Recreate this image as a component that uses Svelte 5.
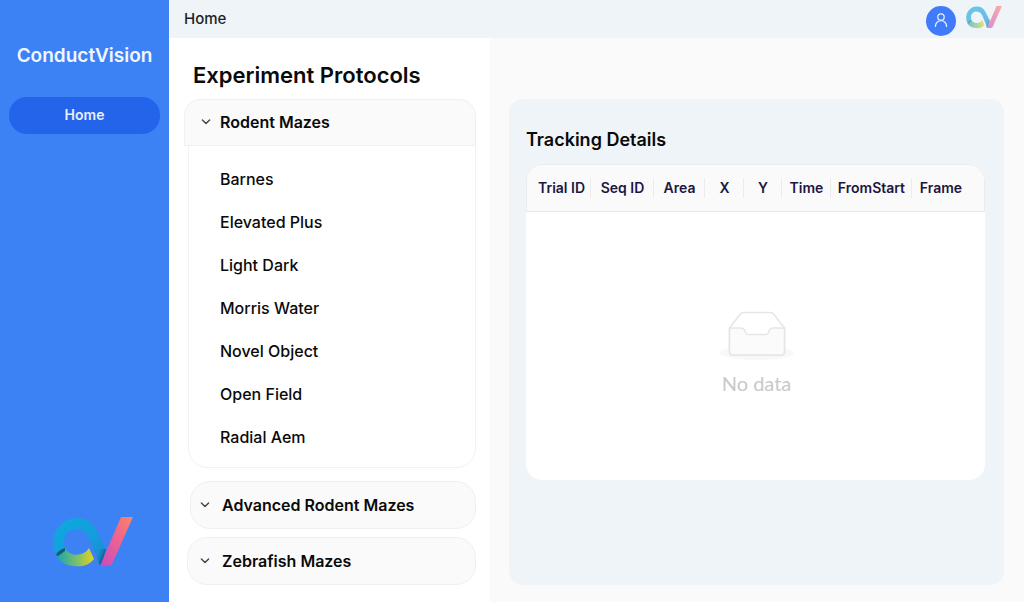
<script>
  const mazes = [
    'Barnes',
    'Elevated Plus',
    'Light Dark',
    'Morris Water',
    'Novel Object',
    'Open Field',
    'Radial Aem'
  ];

  // Relative column weights of the tracking table
  const columns = [
    { label: 'Trial ID', weight: 65 },
    { label: 'Seq ID', weight: 63 },
    { label: 'Area', weight: 51 },
    { label: 'X', weight: 39 },
    { label: 'Y', weight: 38 },
    { label: 'Time', weight: 49 },
    { label: 'FromStart', weight: 81 },
    { label: 'Frame', weight: 73 }
  ];
  const total = columns.reduce((sum, c) => sum + c.weight, 0);

  let open = $state(true);
</script>

{#snippet chevron()}
  <svg class="chevron" viewBox="0 0 12 12" aria-hidden="true">
    <path d="M2.4 4 L6 7.6 L9.6 4" fill="none" stroke="#444" stroke-width="1.4" stroke-linecap="round" stroke-linejoin="round" />
  </svg>
{/snippet}

{#snippet logo(id)}
  <svg viewBox="0 0 80 52" aria-hidden="true">
    <defs>
      <linearGradient id="{id}-ring" x1="0" y1="0" x2="1" y2="1">
        <stop offset="0" stop-color="#0cabdc" />
        <stop offset="0.6" stop-color="#149cdc" />
        <stop offset="1" stop-color="#1c86cc" />
      </linearGradient>
      <linearGradient id="{id}-tail" x1="0" y1="0" x2="1" y2="0">
        <stop offset="0" stop-color="#16a3b4" />
        <stop offset="0.5" stop-color="#6fbd74" />
        <stop offset="1" stop-color="#e6d41c" />
      </linearGradient>
      <linearGradient id="{id}-arm" x1="1" y1="0" x2="0" y2="1">
        <stop offset="0" stop-color="#fb8465" />
        <stop offset="0.45" stop-color="#ee6390" />
        <stop offset="1" stop-color="#c94bc0" />
      </linearGradient>
      <linearGradient id="{id}-fold" x1="0" y1="0" x2="1" y2="0.5">
        <stop offset="0.2" stop-color="#149cdc" stop-opacity="0" />
        <stop offset="1" stop-color="#103a64" />
      </linearGradient>
    </defs>
    <path d="M3 38 C-5 19 7 1 24 1 C33 1 39 5 42 11 L53 32 L48 49 C46 48 45 44 44 40 L36 21 C33 15 29 12 23 12 C14 12 9 21 12 31 Z" fill="url(#{id}-ring)" />
    <path d="M3 38 C6 34 9 32 12 31 C15 37 22 39 28 37 C32 36 34 34 36 31 L41 42 C36 48 30 50 22 49 C12 49 6 44 3 38 Z" fill="url(#{id}-tail)" />
    <path d="M3 38 C5 34 8 32 12 31 L12 34 L5 39 Z" fill="#125b78" />
    <path d="M41 32 L53 32 L48 49 C46 48 45 44 44 40 Z" fill="url(#{id}-fold)" />
    <path d="M68 0 L80 0 L59 47 C58 49 49 49 47 49 Z" fill="url(#{id}-arm)" />
  </svg>
{/snippet}

<div class="app">
  <aside class="sidebar">
    <div class="brand">ConductVision</div>
    <nav><a class="nav-link" href="#home">Home</a></nav>
    <div class="sidebar-logo">{@render logo('side')}</div>
  </aside>

  <div class="main">
    <header class="topbar">
      <span class="crumb">Home</span>
      <div class="account">
        <button class="avatar" type="button" aria-label="Account">
          <svg viewBox="0 0 30 30" aria-hidden="true">
            <g fill="none" stroke="#e4ecff" stroke-width="1.3" stroke-linecap="round">
              <circle cx="15" cy="11" r="3.2" />
              <path d="M9.4 20.4 C9.4 17 12 14.6 15 14.6 C18 14.6 20.6 17 20.6 20.4" />
            </g>
          </svg>
        </button>
        <div class="top-logo">{@render logo('top')}</div>
      </div>
    </header>

    <div class="content">
      <section class="protocols">
        <h1>Experiment Protocols</h1>

        <div class="group">
          <button class="head first" class:open type="button" aria-expanded={open} onclick={() => (open = !open)}>
            {@render chevron()}<span>Rodent Mazes</span>
          </button>
          {#if open}
            <ul class="mazes">
              {#each mazes as maze}
                <li>{maze}</li>
              {/each}
            </ul>
          {/if}
        </div>

        <button class="head advanced" type="button">
          {@render chevron()}<span>Advanced Rodent Mazes</span>
        </button>
        <button class="head zebrafish" type="button">
          {@render chevron()}<span>Zebrafish Mazes</span>
        </button>
      </section>

      <section class="tracking">
        <div class="card">
          <h2>Tracking Details</h2>
          <div class="table-box">
            <table>
              <colgroup>
                {#each columns as c}
                  <col style="width: {(c.weight / total) * 100}%" />
                {/each}
              </colgroup>
              <thead>
                <tr>
                  {#each columns as c}
                    <th scope="col">{c.label}</th>
                  {/each}
                </tr>
              </thead>
              <tbody>
                <tr>
                  <td colspan={columns.length}>
                    <svg class="empty" viewBox="0 0 74 52" aria-hidden="true">
                      <ellipse cx="37" cy="43" rx="37" ry="7" fill="#f8f8f8" />
                      <path d="M9.5 18 L20 4.5 C21 3 22 2.5 24 2.5 H50 C52 2.5 53 3 54 4.5 L64.5 18 V42 C64.5 44 63.5 45 61.5 45 H12.5 C10.5 45 9.5 44 9.5 42 Z" fill="#fff" stroke="#e6e6e6" stroke-width="1.6" />
                      <path d="M9.5 18 H21 C23 18 24 18.5 25 21 L26 23.5 C26.5 24.5 27 24.5 28 24.5 H46 C47 24.5 47.5 24.5 48 23.5 L49 21 C50 18.5 51 18 53 18 H64.5 V42 C64.5 44 63.5 45 61.5 45 H12.5 C10.5 45 9.5 44 9.5 42 Z" fill="#fbfbfb" stroke="#e6e6e6" stroke-width="1.6" />
                    </svg>
                    <div class="no-data">No data</div>
                  </td>
                </tr>
              </tbody>
            </table>
          </div>
        </div>
      </section>
    </div>
  </div>
</div>

<style>
  :global(body) {
    margin: 0;
  }

  .app {
    display: grid;
    grid-template-columns: 169px 1fr;
    min-height: 100vh;
    font-family: Inter, 'Liberation Sans', sans-serif;
    color: #0a0a0a;
    background: #fafafa;
  }

  svg {
    display: block;
  }

  button {
    font: inherit;
    color: inherit;
    cursor: pointer;
  }

  .sidebar {
    display: flex;
    flex-direction: column;
    box-sizing: border-box;
    padding: 44px 9px 33px;
    background: #3d82f5;
    color: #f1f6ff;
  }

  .brand {
    font-size: 19px;
    line-height: 24px;
    font-weight: 600;
    text-align: center;
  }

  .nav-link {
    display: block;
    margin-top: 29px;
    padding-bottom: 1px;
    border-radius: 18px;
    background: #2364eb;
    color: #e8f0ff;
    font-size: 14px;
    line-height: 36px;
    font-weight: 600;
    text-align: center;
    text-decoration: none;
  }

  .sidebar-logo {
    width: 80px;
    margin: auto auto 0 44px;
  }

  .main {
    display: flex;
    flex-direction: column;
    min-width: 0;
  }

  .topbar {
    display: flex;
    justify-content: space-between;
    height: 38px;
    padding: 0 22px 0 15px;
    background: #eff4f8;
  }

  .crumb {
    font-size: 15px;
    line-height: 38px;
    font-weight: 500;
    color: #1c1f24;
  }

  .account {
    display: flex;
    gap: 10px;
    padding-top: 6px;
  }

  .avatar {
    width: 30px;
    height: 30px;
    padding: 0;
    border: 0;
    border-radius: 50%;
    background: #3f7bfa;
  }

  .top-logo {
    width: 36px;
    opacity: 0.6;
  }

  .content {
    flex: 1;
    display: grid;
    grid-template-columns: 321fr 534fr;
  }

  .protocols {
    padding: 22px 14px 17px 15px;
    background: #fff;
  }

  h1 {
    margin: 0 0 9px 9px;
    font-size: 22px;
    line-height: 30px;
    font-weight: 600;
  }

  .head {
    display: flex;
    align-items: center;
    box-sizing: border-box;
    height: 48px;
    padding: 0 15px 1px;
    gap: 8px;
    border: 1px solid #f0f0f0;
    border-radius: 20px;
    background: #fafafa;
    font-size: 16px;
    font-weight: 600;
  }

  .first {
    width: 100%;
    height: 47px;
  }

  .first.open {
    border-radius: 16px 16px 0 0;
  }

  .advanced {
    width: calc(100% - 6px);
    margin: 13px 0 0 6px;
    padding: 0 8px;
    gap: 11px;
  }

  .zebrafish {
    width: calc(100% - 3px);
    margin: 8px 0 0 3px;
    padding: 0 11px;
    gap: 11px;
  }

  .chevron {
    width: 12px;
    height: 12px;
  }

  .mazes {
    margin: 0 0 0 4px;
    padding: 12px 31px 8px;
    border: 1px solid #f2f2f2;
    border-top: 0;
    border-radius: 0 0 20px 20px;
    list-style: none;
    font-size: 16px;
    line-height: 43px;
    font-weight: 500;
  }

  .tracking {
    display: flex;
    padding: 61px 20px 17px 19px;
  }

  .card {
    flex: 1;
    padding: 29px 19px 20px 17px;
    border-radius: 14px;
    background: #eff4f8;
  }

  h2 {
    margin: 0 0 12px;
    font-size: 18px;
    line-height: 24px;
    font-weight: 600;
  }

  .table-box {
    overflow: hidden;
    border-radius: 16px;
    background: #fff;
  }

  table {
    width: 100%;
    table-layout: fixed;
    border-collapse: separate;
    border-spacing: 0;
  }

  th {
    box-sizing: border-box;
    height: 48px;
    padding: 0 0 1px;
    border-top: 1px solid #ebecee;
    border-bottom: 1px solid #e6e6e8;
    background: linear-gradient(#ececee, #ececee) right center / 1px 20px no-repeat #fafafa;
    color: #1b1642;
    font-size: 14px;
    font-weight: 600;
    white-space: nowrap;
  }

  th:first-child {
    padding-left: 5px;
    border-left: 1px solid #ebecee;
    border-top-left-radius: 16px;
  }

  th:last-child {
    padding-right: 14px;
    border-right: 1px solid #ebecee;
    border-top-right-radius: 16px;
    background: #fafafa;
  }

  td {
    height: 268px;
    padding: 0 0 0 2px;
    vertical-align: middle;
  }

  .empty {
    width: 74px;
    margin: 12px auto 9px;
  }

  .no-data {
    font-family: Lato, Inter, sans-serif;
    font-size: 20px;
    line-height: 24px;
    text-align: center;
    color: #c8c8c8;
  }
</style>
